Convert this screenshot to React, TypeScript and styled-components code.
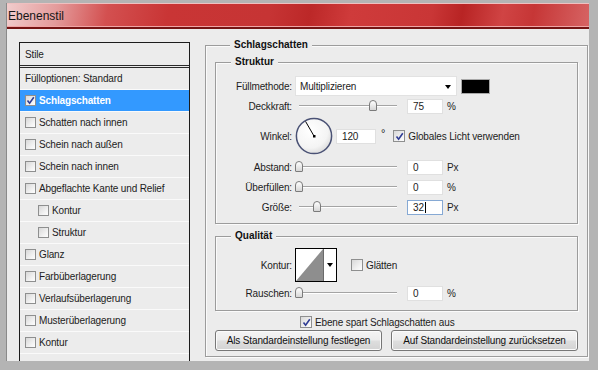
import React from "react";
import styled, { createGlobalStyle } from "styled-components";

const GlobalStyle = createGlobalStyle`
  html, body { margin: 0; padding: 0; background: #b4b4b4; }
  body {
    font-family: "Liberation Sans", Arial, sans-serif;
    font-size: 10px;
    letter-spacing: -0.15px;
    color: #1c1c22;
  }
`;

const Screen = styled.div`
  width: 598px;
  height: 370px;
  box-sizing: border-box;
  padding: 3px 0 0 6px;
  overflow: hidden;
`;

const Window = styled.div`
  width: 583px;
  height: 358px;
  display: flex;
  flex-direction: column;
  box-sizing: border-box;
  background: #ececec;
  border-left: 1px solid #8a8a8a;
  overflow: hidden;
`;

const TitleBar = styled.div`
  height: 26px;
  flex-shrink: 0;
  box-sizing: border-box;
  display: flex;
  align-items: center;
  padding: 1px 0 0 1px;
  font-size: 12px;
  letter-spacing: 0;
  color: #161616;
  border-top: 1px solid #efc0c0;
  border-bottom: 2px solid #751313;
  box-shadow: inset 0 -1px 0 #f0a5a5;
  background: linear-gradient(
    100deg,
    #f1cccc 0px,
    #e49b9b 50px,
    #d35050 100px,
    #c93535 160px,
    #c63434 260px,
    #bc2828 300px,
    #cf3b3b 340px,
    #c93636 420px,
    #b82424 450px,
    #d04444 490px,
    #c63636 520px,
    #d86868 583px
  );
`;

const Body = styled.div`
  flex: 1;
  display: flex;
  gap: 15px;
  padding: 13px 0 0 12px;
  overflow: hidden;
`;

/* ---------- left style list ---------- */

const StyleList = styled.div`
  width: 171px;
  flex-shrink: 0;
  box-sizing: border-box;
  border: 1px solid #1c1c1c;
  border-bottom: none;
`;

const ListHeader = styled.div`
  height: 22px;
  display: flex;
  align-items: center;
  padding-left: 5px;
  border-bottom: 3px double #2a2a2a;
`;

const ListRow = styled.div<{ $selected?: boolean; $indent?: boolean }>`
  height: 21px;
  display: flex;
  align-items: center;
  gap: 3px;
  padding-left: ${(p) => (p.$indent ? 18 : 5)}px;
  border-bottom: 1px solid #fafafa;
  background: ${(p) => (p.$selected ? "#3399ff" : "transparent")};
  color: ${(p) => (p.$selected ? "#fff" : "inherit")};
  font-weight: ${(p) => (p.$selected ? "bold" : "normal")};
`;

const Box = styled.span<{ $size?: number }>`
  width: ${(p) => p.$size || 11}px;
  height: ${(p) => p.$size || 11}px;
  flex-shrink: 0;
  box-sizing: border-box;
  border: 1px solid #8e8f8f;
  background: linear-gradient(135deg, #d8d8d8 0%, #f4f4f4 70%, #fdfdfd 100%);
  display: flex;
  align-items: center;
  justify-content: center;
`;

const Check = ({ checked, size }: { checked?: boolean; size?: number }) => (
  <Box $size={size}>
    {checked && (
      <svg width="9" height="9" viewBox="0 0 9 9">
        <path d="M1.5 4.5 L3.6 7.2 L7.8 1.2" fill="none" stroke="#2f3c94" strokeWidth="1.6" />
      </svg>
    )}
  </Box>
);

/* ---------- right settings ---------- */

const Group = styled.div<{ $h: number; $w?: number }>`
  height: ${(p) => p.$h}px;
  ${(p) => (p.$w ? `width: ${p.$w}px;` : "")}
  flex-shrink: 0;
  box-sizing: border-box;
  border: 1px solid #9c9c9c;
  box-shadow: inset 1px 1px 0 #fbfbfb, 1px 1px 0 #fbfbfb;
  display: flex;
  flex-direction: column;
`;

const OuterGroup = styled(Group)`
  margin-top: 3px;
  padding: 0 9px;
`;

const Caption = styled.div`
  width: fit-content;
  margin: -8px 0 0 15px;
  padding: 0 4px;
  line-height: 14px;
  font-weight: bold;
  letter-spacing: 0;
  background: #ececec;
  color: #111;
`;

const SubGroup = styled(Group)<{ $top: number }>`
  margin-top: ${(p) => p.$top}px;
`;

const Rows = styled.div<{ $top: number }>`
  margin-top: ${(p) => p.$top}px;
  display: flex;
  flex-direction: column;
`;

const Row = styled.div<{ $h: number }>`
  height: ${(p) => p.$h}px;
  display: flex;
  align-items: center;
`;

const Label = styled.div`
  width: 76px;
  text-align: right;
  margin-right: 3px;
  flex-shrink: 0;
  white-space: nowrap;
`;

const Select = styled.div`
  width: 162px;
  height: 20px;
  box-sizing: border-box;
  background: #fff;
  border: 1px solid #e2e2e2;
  display: flex;
  align-items: center;
  justify-content: space-between;
  padding: 0 5px 0 4px;
`;

const Arrow = styled.span`
  width: 0;
  height: 0;
  border-left: 3.5px solid transparent;
  border-right: 3.5px solid transparent;
  border-top: 4px solid #000;
  margin-top: 2px;
`;

const Swatch = styled.div`
  width: 29px;
  height: 15px;
  margin-left: 4px;
  box-sizing: border-box;
  background: #000;
  border: 1px solid #a8a8a8;
`;

const SliderBox = styled.div`
  position: relative;
  width: 102px;
  height: 14px;
  margin-right: 10px;
  flex-shrink: 0;
`;

const Track = styled.div`
  position: absolute;
  left: 4px;
  right: 0;
  top: 6px;
  height: 0;
  border-top: 1px solid #a4a4a4;
  border-bottom: 1px solid #fff;
`;

const Thumb = styled.div`
  position: absolute;
  top: 1px;
  width: 8px;
  height: 11px;
  margin-left: -4px;
  box-sizing: border-box;
  border: 1px solid #7b7b7b;
  border-radius: 4px 4px 1px 1px;
  background: linear-gradient(#ffffff, #d6d6d6);
`;

const Slider = ({ pos }: { pos: number }) => (
  <SliderBox>
    <Track />
    <Thumb style={{ left: 4 + pos * 98 }} />
  </SliderBox>
);

const Field = styled.div<{ $focus?: boolean; $w?: number }>`
  width: ${(p) => p.$w || 36}px;
  height: 15px;
  box-sizing: border-box;
  background: #fff;
  border: 1px solid ${(p) => (p.$focus ? "#86a9d4" : "#e0e0e0")};
  padding-left: 5px;
  display: flex;
  align-items: center;
  color: #1c1c22;
`;

const Caret = styled.span`
  width: 1px;
  height: 11px;
  background: #000;
  margin-left: 1px;
`;

const Unit = styled.span`
  margin-left: 4px;
`;

const Degree = styled.span`
  margin: -6px 8px 0 5px;
  font-size: 11px;
`;

const CheckLabel = styled.div<{ $gap?: number }>`
  display: flex;
  align-items: center;
  gap: 3px;
  margin-left: ${(p) => p.$gap || 0}px;
`;

const Dial = () => (
  <svg width="38" height="38" viewBox="0 0 38 38" style={{ marginRight: 3 }}>
    <defs>
      <radialGradient id="dialFill" cx="0.4" cy="0.35" r="0.7">
        <stop offset="0" stopColor="#ffffff" />
        <stop offset="0.7" stopColor="#f4f4f4" />
        <stop offset="1" stopColor="#d9d9d9" />
      </radialGradient>
    </defs>
    <circle cx="19" cy="19" r="17.6" fill="url(#dialFill)" stroke="#4a5275" strokeWidth="1.5" />
    <line x1="19" y1="19" x2="10.6" y2="4.5" stroke="#000" strokeWidth="1" />
    <rect x="18" y="18" width="2.5" height="2.5" fill="#000" />
  </svg>
);

const ContourPreview = () => (
  <svg width="42" height="34" viewBox="0 0 42 34" style={{ marginRight: 14 }}>
    <rect x="0.5" y="0.5" width="41" height="33" fill="#fff" stroke="#000" />
    <polygon points="1,33 28,1 28,33" fill="#8e8e8e" />
    <line x1="28.5" y1="1" x2="28.5" y2="33" stroke="#6a6a6a" />
    <polygon points="32,15 38,15 35,19" fill="#000" />
  </svg>
);

const BottomCheck = styled.div`
  height: 14px;
  margin-top: 4px;
  padding-left: 85px;
  display: flex;
  align-items: center;
`;

const Buttons = styled.div`
  display: flex;
  gap: 9px;
  margin-top: 1px;
`;

const Button = styled.button<{ $w: number }>`
  width: ${(p) => p.$w}px;
  height: 21px;
  padding: 0;
  font-family: inherit;
  font-size: 10px;
  letter-spacing: -0.15px;
  color: #111;
  border: 1px solid #777;
  border-radius: 3px;
  background: linear-gradient(#f4f4f4 0%, #ececec 48%, #dedede 52%, #d3d3d3 100%);
  box-shadow: inset 0 0 0 1px #fbfbfb;
`;

const styles = [
  { label: "Fülloptionen: Standard", noBox: true },
  { label: "Schlagschatten", checked: true, selected: true },
  { label: "Schatten nach innen" },
  { label: "Schein nach außen" },
  { label: "Schein nach innen" },
  { label: "Abgeflachte Kante und Relief" },
  { label: "Kontur", indent: true },
  { label: "Struktur", indent: true },
  { label: "Glanz" },
  { label: "Farbüberlagerung" },
  { label: "Verlaufsüberlagerung" },
  { label: "Musterüberlagerung" },
  { label: "Kontur" },
];

export default function App() {
  return (
    <>
      <GlobalStyle />
      <Screen>
        <Window>
          <TitleBar>Ebenenstil</TitleBar>
          <Body>
            <StyleList>
              <ListHeader>Stile</ListHeader>
              {styles.map((s, i) => (
                <ListRow key={i} $selected={s.selected} $indent={s.indent}>
                  {!s.noBox && <Check checked={s.checked} />}
                  {s.label}
                </ListRow>
              ))}
            </StyleList>

            <OuterGroup $h={312} $w={383}>
              <Caption>Schlagschatten</Caption>

              <SubGroup $h={162} $top={10}>
                <Caption>Struktur</Caption>
                <Rows $top={6}>
                  <Row $h={22}>
                    <Label>Füllmethode:</Label>
                    <Select>
                      Multiplizieren
                      <Arrow />
                    </Select>
                    <Swatch />
                  </Row>
                  <Row $h={18}>
                    <Label>Deckkraft:</Label>
                    <Slider pos={0.75} />
                    <Field>75</Field>
                    <Unit>%</Unit>
                  </Row>
                  <Row $h={42}>
                    <Label>Winkel:</Label>
                    <Dial />
                    <Field $w={40}>120</Field>
                    <Degree>°</Degree>
                    <CheckLabel>
                      <Check checked size={12} />
                      Globales Licht verwenden
                    </CheckLabel>
                  </Row>
                  <Row $h={20}>
                    <Label>Abstand:</Label>
                    <Slider pos={0} />
                    <Field>0</Field>
                    <Unit>Px</Unit>
                  </Row>
                  <Row $h={20}>
                    <Label>Überfüllen:</Label>
                    <Slider pos={0} />
                    <Field>0</Field>
                    <Unit>%</Unit>
                  </Row>
                  <Row $h={20}>
                    <Label>Größe:</Label>
                    <Slider pos={0.185} />
                    <Field $focus>
                      32
                      <Caret />
                    </Field>
                    <Unit>Px</Unit>
                  </Row>
                </Rows>
              </SubGroup>

              <SubGroup $h={75} $top={12}>
                <Caption>Qualität</Caption>
                <Rows $top={4}>
                  <Row $h={36}>
                    <Label>Kontur:</Label>
                    <ContourPreview />
                    <CheckLabel>
                      <Check size={12} />
                      Glätten
                    </CheckLabel>
                  </Row>
                  <Row $h={20}>
                    <Label>Rauschen:</Label>
                    <Slider pos={0} />
                    <Field>0</Field>
                    <Unit>%</Unit>
                  </Row>
                </Rows>
              </SubGroup>

              <BottomCheck>
                <CheckLabel>
                  <Check checked size={12} />
                  Ebene spart Schlagschatten aus
                </CheckLabel>
              </BottomCheck>

              <Buttons>
                <Button $w={168}>Als Standardeinstellung festlegen</Button>
                <Button $w={188}>Auf Standardeinstellung zurücksetzen</Button>
              </Buttons>
            </OuterGroup>
          </Body>
        </Window>
      </Screen>
    </>
  );
}
